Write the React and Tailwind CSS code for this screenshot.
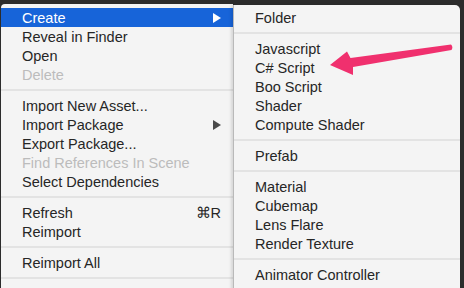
import React from 'react';

const mainItems = [
  { label: 'Create', active: true, arrow: true },
  { label: 'Reveal in Finder' },
  { label: 'Open' },
  { label: 'Delete', disabled: true },
  { sep: true },
  { label: 'Import New Asset...' },
  { label: 'Import Package', arrow: true },
  { label: 'Export Package...' },
  { label: 'Find References In Scene', disabled: true },
  { label: 'Select Dependencies' },
  { sep: true },
  { label: 'Refresh', shortcut: '⌘R' },
  { label: 'Reimport' },
  { sep: true },
  { label: 'Reimport All' },
  { sep: true },
];

const subItems = [
  { label: 'Folder' },
  { sep: true },
  { label: 'Javascript' },
  { label: 'C# Script' },
  { label: 'Boo Script' },
  { label: 'Shader' },
  { label: 'Compute Shader' },
  { sep: true },
  { label: 'Prefab' },
  { sep: true },
  { label: 'Material' },
  { label: 'Cubemap' },
  { label: 'Lens Flare' },
  { label: 'Render Texture' },
  { sep: true },
  { label: 'Animator Controller' },
];

function Separator() {
  return (
    <div className="h-[12px] flex items-center">
      <div className="w-full h-[2px] bg-[#e3e3e3]" />
    </div>
  );
}

function SubArrow({ active }) {
  return (
    <svg width="8" height="10" viewBox="0 0 8 10" className="shrink-0">
      <polygon points="0,0 8,5 0,10" fill={active ? '#ffffff' : '#4a4a4a'} />
    </svg>
  );
}

function MenuRow({ item }) {
  const color = item.active ? 'text-white bg-[#1764d9]' : item.disabled ? 'text-[#bcbcbc]' : 'text-[#262626]';
  return (
    <div className={`h-[19px] flex items-center justify-between leading-none pl-[21px] pr-[12px] ${color}`}>
      <span className="whitespace-nowrap pt-[1px]">{item.label}</span>
      {item.arrow && <SubArrow active={item.active} />}
      {item.shortcut && <span className="whitespace-nowrap pt-[1px]">{item.shortcut}</span>}
    </div>
  );
}

export default function App() {
  return (
    <div className="relative w-[464px] h-[288px] overflow-hidden bg-[#2c2c2c] font-['Liberation_Sans',Arial,sans-serif] text-[14.5px]">
      <div className="flex items-start pt-[4px]">
        {/* main context menu */}
        <div className="ml-[1px] w-[232px] h-[300px] shrink-0 bg-[#f4f4f4] rounded-tl-[4px] pt-[4px]">
          {mainItems.map((item, i) =>
            item.sep ? <Separator key={i} /> : <MenuRow key={i} item={item} />
          )}
        </div>

        {/* Create submenu */}
        <div className="mt-[1px] w-[227px] h-[300px] shrink-0 bg-[#f4f4f4] border-l border-[#b9b9b9] rounded-tr-[5px] pt-[3px] shadow-[-2px_0_3px_rgba(0,0,0,0.12)]">
          {subItems.map((item, i) =>
            item.sep ? <Separator key={i} /> : <MenuRow key={i} item={item} />
          )}
        </div>
      </div>

      {/* annotation arrow */}
      <svg className="absolute left-0 top-0 pointer-events-none" width="464" height="288" viewBox="0 0 464 288">
        <path
          d="M451,44.5 Q453.5,47 451.5,50 L353,67 L353,75 L330,65 L347,51.5 L350.5,58 Z"
          fill="#f0306e"
        />
      </svg>
    </div>
  );
}
